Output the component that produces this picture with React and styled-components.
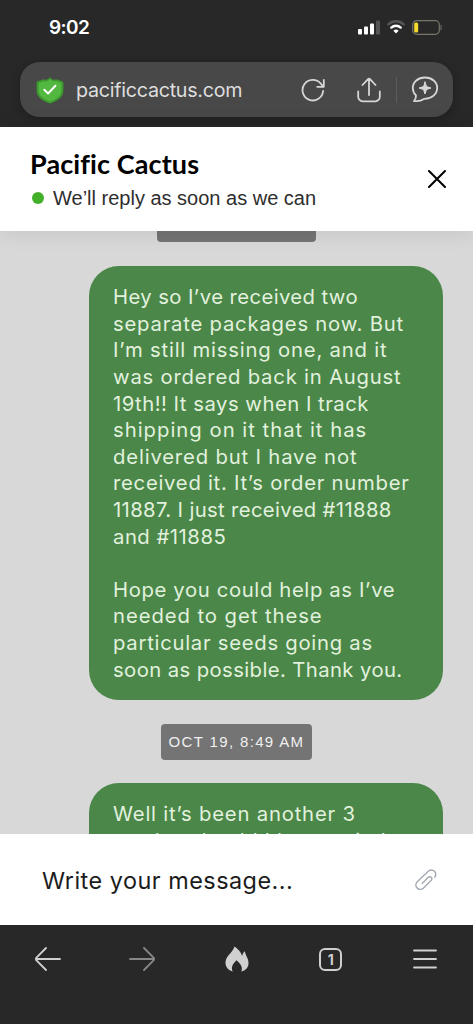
import React from "react";
import styled, { createGlobalStyle } from "styled-components";

const GlobalStyle = createGlobalStyle`
  * {
    box-sizing: border-box;
  }
  body {
    margin: 0;
    font-family: "Inter", "Liberation Sans", sans-serif;
  }
`;

const Screen = styled.div`
  display: flex;
  flex-direction: column;
  width: 473px;
  height: 1024px;
  overflow: hidden;
  background: #282828;
`;

const TopBar = styled.header`
  height: 127px;
  flex: none;
  background: #282828;
`;

const StatusBar = styled.div`
  display: flex;
  align-items: center;
  height: 62px;
  padding: 0 31px 8px 49px;
`;

const Clock = styled.span`
  flex: 1;
  padding-top: 1px;
  color: #fff;
  font-size: 19px;
  font-weight: 600;
  line-height: 24px;
  letter-spacing: -0.6px;
`;

const AddressBar = styled.div`
  display: flex;
  align-items: center;
  height: 55px;
  margin: 0 20px;
  padding: 0 14px 0 16px;
  border-radius: 20px;
  background: #484848;
  box-shadow: 0 2px 10px rgba(0, 0, 0, 0.25);
`;

const Url = styled.span`
  flex: 1;
  margin-left: 12px;
  color: #dedede;
  font-family: "Inter", sans-serif;
  font-size: 19.7px;
  line-height: 26px;
  letter-spacing: -0.27px;
`;

const Divider = styled.i`
  width: 1px;
  height: 26px;
  margin: 0 14px 0 15px;
  background: #5c5c5c;
`;

const Icon = styled.svg`
  display: block;
  flex: none;
  width: ${(props) => props.$w}px;
  height: ${(props) => props.$h}px;
  margin-left: ${(props) => props.$left || 0}px;
  fill: none;
  stroke: ${(props) => props.$color || "none"};
  stroke-width: ${(props) => props.$stroke || 1.8};
  stroke-linecap: round;
  stroke-linejoin: round;
`;

const ChatHeader = styled.section`
  display: flex;
  align-items: center;
  flex: none;
  position: relative;
  height: 104px;
  padding: 0 27px 0 30px;
  background: #fff;
  box-shadow: 0 1px 20px rgba(0, 0, 0, 0.1);
`;

const HeaderText = styled.div`
  flex: 1;
  padding-top: 4px;
`;

const Title = styled.h1`
  margin: 0;
  font-family: "Lato", sans-serif;
  font-size: 27px;
  font-weight: 700;
  line-height: 34px;
  letter-spacing: 0.1px;
  color: #000;
`;

const Status = styled.p`
  display: flex;
  align-items: center;
  margin: 0;
  padding-left: 2px;
  color: #2e2e2e;
  font-family: "Liberation Sans", sans-serif;
  font-size: 20px;
  line-height: 34px;
`;

const Dot = styled.i`
  width: 12px;
  height: 12px;
  margin-right: 9px;
  border-radius: 50%;
  background: #43b02a;
`;

const Messages = styled.main`
  display: flex;
  flex-direction: column;
  flex: none;
  height: 603px;
  padding: 0 30px;
  overflow: hidden;
  background: #d8d8d8;
`;

const DateChip = styled.div`
  align-self: center;
  flex: none;
  width: ${(props) => props.$w}px;
  height: ${(props) => props.$h}px;
  margin: ${(props) => props.$margin};
  border-radius: ${(props) => props.$radius};
  background: #747474;
  color: #f0f0f0;
  font-family: "Liberation Sans", sans-serif;
  font-size: 15px;
  line-height: 36px;
  letter-spacing: 1.35px;
  text-align: center;
  white-space: nowrap;
`;

const Bubble = styled.div`
  align-self: flex-end;
  flex: none;
  width: 354px;
  height: ${(props) => props.$h}px;
  padding: 18.2px 24px 0;
  border-radius: 30px;
  background: #4a8748;
`;

const Line = styled.div`
  height: 26.6px;
  color: #e2f1de;
  font-size: 20.3px;
  font-weight: 400;
  line-height: 26.6px;
  letter-spacing: ${(props) => props.$track || 0}px;
  white-space: nowrap;
`;

const Composer = styled.section`
  display: flex;
  align-items: center;
  flex: none;
  position: relative;
  height: 91px;
  padding: 1px 36px 0 42px;
  background: #fff;
`;

const Placeholder = styled.span`
  flex: 1;
  padding-top: 1px;
  color: #1c1c1c;
  font-size: 23.4px;
  font-weight: 400;
  letter-spacing: 0.5px;
`;

const BottomNav = styled.nav`
  display: flex;
  justify-content: space-between;
  flex: none;
  height: 99px;
  padding: 20px 34px 0;
`;

const NavItem = styled.div`
  display: flex;
  align-items: center;
  justify-content: center;
  width: 28px;
  height: 28px;
`;

const TabCount = styled.span`
  display: flex;
  align-items: center;
  justify-content: center;
  width: 23px;
  height: 23px;
  border: 2px solid #cfcfcf;
  border-radius: 6px;
  color: #cfcfcf;
  font-size: 14px;
  font-weight: 700;
`;

// [text, letter spacing]
const firstMessage = [
  ["Hey so I’ve received two", 0.4],
  ["separate packages now. But", 0.78],
  ["I’m still missing one, and it", 0.8],
  ["was ordered back in August", 0.78],
  ["19th!! It says when I track", 0.5],
  ["shipping on it that it has", 1],
  ["delivered but I have not", 0.83],
  ["received it. It’s order number", 0.73],
  ["11887. I just received #11888", 0.35],
  ["and #11885", 0.5],
  ["", 0],
  ["Hope you could help as I’ve", 0.63],
  ["needed to get these", 0.93],
  ["particular seeds going as", 0.73],
  ["soon as possible. Thank you.", 0.4],
];

const secondMessage = [
  ["Well it’s been another 3", 0.8],
  ["weeks, should I be worried", 0.6],
];

function Message({ lines, height }) {
  return (
    <Bubble $h={height}>
      {lines.map(([text, track], i) => (
        <Line key={i} $track={track}>
          {text}
        </Line>
      ))}
    </Bubble>
  );
}

function Signal() {
  return (
    <Icon $w={22} $h={15} viewBox="0 0 22 15">
      <rect x="0" y="9" width="4" height="5.5" rx="1" fill="#fff" />
      <rect x="6" y="6.5" width="4" height="8" rx="1" fill="#fff" />
      <rect x="12" y="3.5" width="4" height="11" rx="1" fill="#fff" />
      <rect x="18" y="0.5" width="4" height="14" rx="1" fill="#555" />
    </Icon>
  );
}

function Wifi() {
  return (
    <Icon $w={18} $h={14} $left={7} $stroke={2.4} viewBox="0 0 18 14">
      <path d="M1.3 4.4a11 11 0 0 1 15.4 0" stroke="#555" />
      <path d="M4.3 7.6a6.8 6.8 0 0 1 9.4 0" stroke="#fff" />
      <path d="M9 13.5 6.4 10.8a3.8 3.8 0 0 1 5.2 0Z" fill="#fff" />
    </Icon>
  );
}

function Battery() {
  return (
    <Icon $w={30} $h={15} $left={7} $stroke={1.2} viewBox="0 0 30 15">
      <rect x="0.7" y="0.7" width="26.6" height="13.6" rx="4" stroke="#77746a" />
      <rect x="2.2" y="2.4" width="4" height="10.2" rx="1.5" fill="#f5dc2c" />
      <path d="M29 5.5v4" stroke="#666" />
    </Icon>
  );
}

function Shield() {
  return (
    <Icon $w={28} $h={28} viewBox="0 0 28 28">
      <path
        d="M14 1.200C15.800 3.500 18 4 20.400 3.600c2.200-.2 3 1.200 6 1.800 1 .2 1 1 1 2.100v7c0 6.500-5.500 10.300-13.400 13C6.100 24.800.600 21 .600 14.500v-7c0-1.100 0-1.900 1-2.100 3-.6 3.800-2 6-1.800C10 4 12.200 3.500 14 1.200Z"
        fill="#3c9a2e"
      />
      <path
        d="M14 3.200c1.900 2.100 4.100 2.600 6.400 2.300 1.700-.1 2.700 1 4.900 1.500v7.500c0 5.300-4.700 8.500-11.300 10.900C7.400 23 2.700 19.800 2.700 14.500V7c2.200-.5 3.200-1.600 4.900-1.500 2.300.3 4.500-.2 6.400-2.300Z"
        fill="#52b840"
      />
      <path d="m8.300 13.700 3.800 3.800 7.300-7.700" stroke="#fff" strokeWidth="2" />
    </Icon>
  );
}

export default function App() {
  return (
    <Screen>
      <GlobalStyle />
      <TopBar>
        <StatusBar>
          <Clock>9:02</Clock>
          <Signal />
          <Wifi />
          <Battery />
        </StatusBar>
        <AddressBar>
          <Shield />
          <Url>pacificcactus.com</Url>
          <Icon $w={24} $h={24} $color="#d6d6d6" viewBox="0 0 24 24">
            <path d="M22.100 13A10.300 10.300 0 1 1 19.700 5.500L22 8.500M22.800 2v6.800h-6.600" />
          </Icon>
          <Icon $w={24} $h={26} $left={32} $color="#d6d6d6" viewBox="0 0 24 26">
            <path d="M12 18V2M5.500 8 11 2.200q1-1 2 0L18.500 8M1.200 14.500v5.300a4.500 4.500 0 0 0 4.500 4.500h12.600a4.500 4.500 0 0 0 4.500-4.500v-5.300" />
          </Icon>
          <Divider />
          <Icon $w={28} $h={27} $color="#d6d6d6" viewBox="0 0 28 27">
            <path d="M14 1.500C7 1.500 1.800 6 1.800 12c0 3 1.100 5.500 3.200 7.400.3 2-.6 3.900-2 5.600 2.500.4 7 0 10.500-2.200C20.800 22.600 26.200 18 26.200 12S21 1.500 14 1.500Z" />
            <path d="m14 6 1.500 4.500L20 12l-4.500 1.500L14 18l-1.500-4.500L8 12l4.500-1.500Z" fill="#d6d6d6" strokeWidth="1" />
          </Icon>
        </AddressBar>
      </TopBar>

      <ChatHeader>
        <HeaderText>
          <Title>Pacific Cactus</Title>
          <Status>
            <Dot />
            We’ll reply as soon as we can
          </Status>
        </HeaderText>
        <Icon $w={18} $h={18} $color="#000" $stroke={2} viewBox="0 0 18 18">
          <path d="m1 1 16 16M17 1 1 17" />
        </Icon>
      </ChatHeader>

      <Messages>
        <DateChip $w={159} $h={11} $margin="0 0 24px" $radius="0 0 4px 4px" />
        <Message lines={firstMessage} height={434} />
        <DateChip $w={151} $h={36} $margin="24px 0 23px" $radius="4px">
          OCT 19, 8:49 AM
        </DateChip>
        <Message lines={secondMessage} height={90} />
      </Messages>

      <Composer>
        <Placeholder>Write your message...</Placeholder>
        <Icon $w={22} $h={22} $color="#a3a9b2" $stroke={1.4} viewBox="0 0 22 22">
          <path d="M19.800 8.200c1.200-2 1.200-4.300-.3-5.900-1.900-1.900-4.600-1.700-6.500.2L2.500 12.500c-2 2-2.100 4.800-.4 6.600s4.600 1.700 6.500-.2l7.400-7.300c1.200-1.200 1.200-2.500.3-3.300s-2.200-.8-3.300.3L7.200 14.400" />
        </Icon>
      </Composer>

      <BottomNav>
        <NavItem>
          <Icon $w={26} $h={24} $color="#d0d0d0" viewBox="0 0 26 24">
            <path d="M25 12H1M11 1 1 11.200v1.600L11 23" />
          </Icon>
        </NavItem>
        <NavItem>
          <Icon $w={26} $h={24} $color="#878787" viewBox="0 0 26 24">
            <path d="M1 12h24M15 1l10 10.200v1.600L15 23" />
          </Icon>
        </NavItem>
        <NavItem>
          <Icon $w={24} $h={26} viewBox="0 0 24 26">
            <path
              d="M9.500.5c-1.200 3.800-3.300 5.600-5.500 8.300C1.700 11.600.3 14 .5 17.300c.2 4 3 7.200 7.300 8.200-2-3.700-.5-7.300 3.700-11.300 4.700 4 6.400 7.500 4.800 11.300 4.400-1 7-4 7.200-8 .2-4.700-2.300-6.600-3.700-12.300-1.600 1.400-2.300 2.900-2.700 4.700C16.200 6 13 3 9.500.5Z"
              fill="#d0d0d0"
            />
          </Icon>
        </NavItem>
        <NavItem>
          <TabCount>1</TabCount>
        </NavItem>
        <NavItem>
          <Icon $w={24} $h={20} $color="#d0d0d0" viewBox="0 0 24 20">
            <path d="M1 1.500h22M1 10h22M1 18.500h22" />
          </Icon>
        </NavItem>
      </BottomNav>
    </Screen>
  );
}
